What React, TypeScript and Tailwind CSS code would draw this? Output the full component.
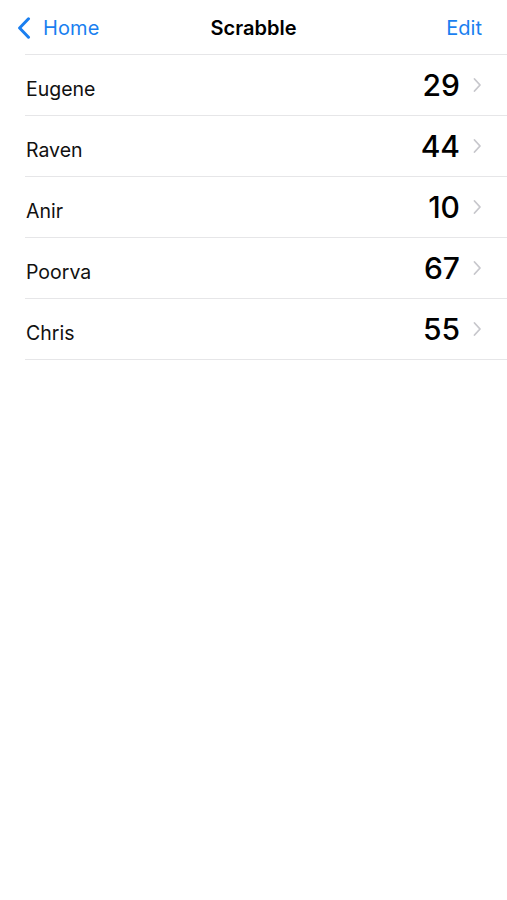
import React from "react";

const players = [
  { name: "Eugene", score: 29 },
  { name: "Raven", score: 44 },
  { name: "Anir", score: 10 },
  { name: "Poorva", score: 67 },
  { name: "Chris", score: 55 },
];

export default function App() {
  return (
    <div className="w-[507px] h-[900px] bg-white" style={{ fontFamily: "Inter, 'Noto Sans', sans-serif" }}>
      <div className="relative flex h-[54px] items-center justify-between pt-[2px]">
        <div className="flex items-center pl-[17px] text-[#1a7ff0]">
          <svg width="14" height="22" viewBox="0 0 14 22" fill="none">
            <path d="M11.5 1.8 L2.6 11 L11.5 20.2" stroke="#1a7ff0" strokeWidth="3" strokeLinecap="round" strokeLinejoin="round" />
          </svg>
          <span className="ml-[12px] text-[20px] leading-none tracking-[0.1px]">Home</span>
        </div>
        <span className="absolute left-1/2 -translate-x-1/2 text-[20px] font-semibold leading-none text-black">Scrabble</span>
        <span className="pr-[25px] text-[20px] leading-none text-[#1a7ff0]">Edit</span>
      </div>
      <div className="ml-[25px] border-t border-[#e6e6e8]">
        {players.map((p) => (
          <div key={p.name} className="flex h-[61px] items-center border-b border-[#e6e6e8] pr-[25px]">
            <span className="ml-px mt-[10px] text-[19.5px] leading-none text-[#111]">{p.name}</span>
            <span className="ml-auto text-[30px] font-medium leading-none text-black">{p.score}</span>
            <svg className="ml-[12px]" width="10" height="16" viewBox="0 0 10 16" fill="none">
              <path d="M2.5 2 L8 8 L2.5 14" stroke="#c7c7cc" strokeWidth="1.8" strokeLinecap="round" strokeLinejoin="round" />
            </svg>
          </div>
        ))}
      </div>
    </div>
  );
}
